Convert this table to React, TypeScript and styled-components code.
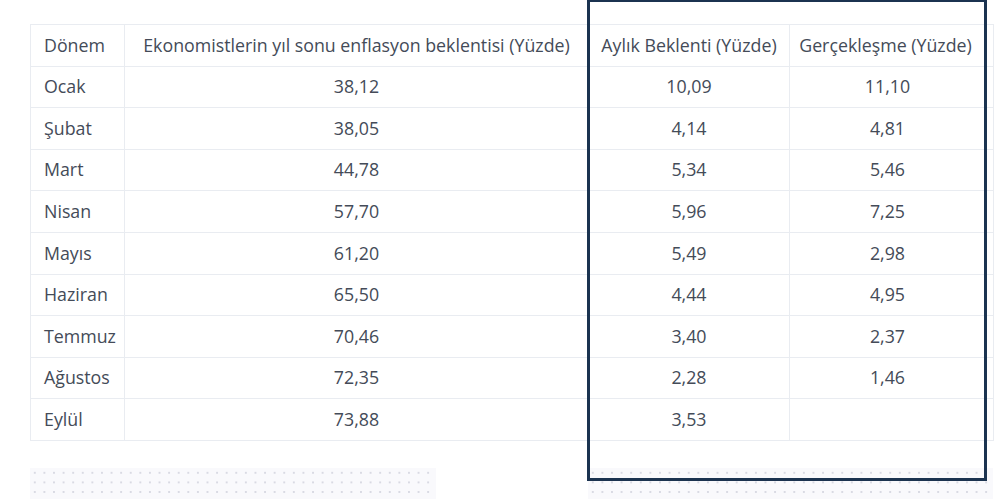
import React from "react";
import styled, { createGlobalStyle } from "styled-components";

const Global = createGlobalStyle`
  html, body { margin: 0; padding: 0; background: #ffffff; }
  body { font-family: "Open Sans", "Noto Sans", sans-serif; color: #444b58; }
`;

const Page = styled.div`
  position: relative;
  width: 1000px;
  height: 499px;
  overflow: hidden;
  padding: 24px 0 0 30px;
  box-sizing: border-box;
`;

const Table = styled.table`
  border-collapse: collapse;
  width: 963px;
  table-layout: fixed;
  font-size: 17.8px;
`;

const Row = styled.tr`
  height: 41.6px;
`;

const Cell = styled.td<{ $align?: "left" | "center"; $shift?: number }>`
  border: 1px solid #e9ecf1;
  padding: 0 ${(p) => 13 + (p.$shift ?? 0)}px 0 13px;
  text-align: ${(p) => p.$align ?? "center"};
  white-space: nowrap;
  font-weight: 400;
  color: #444b58;
  line-height: 1.2;
`;

const HeadCell = styled(Cell).attrs({ as: "th" })`
  padding-left: ${(p) => (p.$align === "left" ? "13px" : "4px")};
  padding-right: ${(p) => 4 + (p.$shift ?? 0)}px;
`;

const Placeholders = styled.div`
  display: flex;
  gap: 152px;
  margin-top: 27px;
`;

const Dotted = styled.div<{ $w: number }>`
  width: ${(p) => p.$w}px;
  height: 40px;
  background-color: #f9f9fc;
  background-image: radial-gradient(circle, #d9dae3 0.9px, transparent 1.2px);
  background-size: 9.6px 9.6px;
  background-position: 0 0;
`;

const Highlight = styled.div`
  position: absolute;
  left: 587px;
  top: -1px;
  width: 400px;
  height: 482px;
  border: 3.5px solid #1b3350;
  box-sizing: border-box;
  pointer-events: none;
`;

const rows: [string, string, string, string][] = [
  ["Ocak", "38,12", "10,09", "11,10"],
  ["Şubat", "38,05", "4,14", "4,81"],
  ["Mart", "44,78", "5,34", "5,46"],
  ["Nisan", "57,70", "5,96", "7,25"],
  ["Mayıs", "61,20", "5,49", "2,98"],
  ["Haziran", "65,50", "4,44", "4,95"],
  ["Temmuz", "70,46", "3,40", "2,37"],
  ["Ağustos", "72,35", "2,28", "1,46"],
  ["Eylül", "73,88", "3,53", ""],
];

export default function App() {
  return (
    <>
      <Global />
      <Page>
        <Table>
          <colgroup>
            <col style={{ width: 94 }} />
            <col style={{ width: 464 }} />
            <col style={{ width: 201 }} />
            <col style={{ width: 204 }} />
          </colgroup>
          <thead>
            <Row>
              <HeadCell $align="left">Dönem</HeadCell>
              <HeadCell>Ekonomistlerin yıl sonu enflasyon beklentisi (Yüzde)</HeadCell>
              <HeadCell>Aylık Beklenti (Yüzde)</HeadCell>
              <HeadCell $shift={12}>Gerçekleşme (Yüzde)</HeadCell>
            </Row>
          </thead>
          <tbody>
            {rows.map((r) => (
              <Row key={r[0]}>
                <Cell $align="left">{r[0]}</Cell>
                <Cell>{r[1]}</Cell>
                <Cell>{r[2]}</Cell>
                <Cell $shift={8}>{r[3]}</Cell>
              </Row>
            ))}
          </tbody>
        </Table>
        <Placeholders>
          <Dotted $w={406} />
          <Dotted $w={405} />
        </Placeholders>
        <Highlight />
      </Page>
    </>
  );
}
